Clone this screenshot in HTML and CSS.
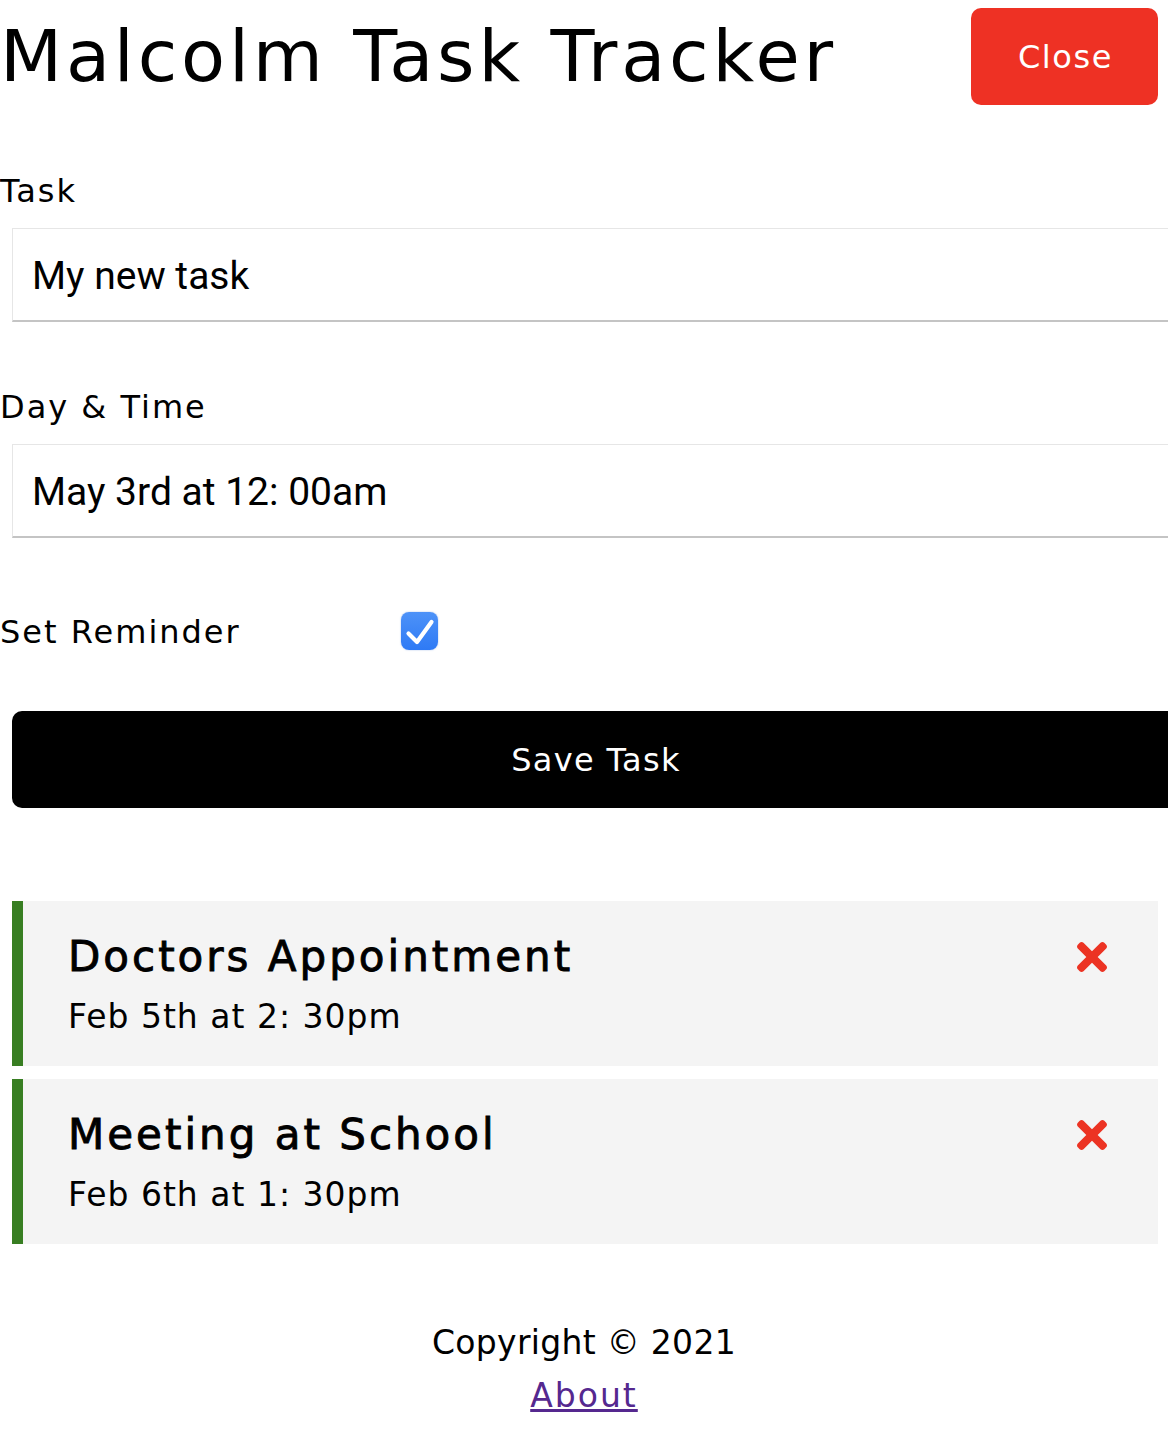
FILE: index.html
```html
<!DOCTYPE html>
<html lang="en">
<head>
<meta charset="utf-8">
<title>Malcolm Task Tracker</title>
<link rel="stylesheet" href="styles.css">
</head>
<body>
<div class="app">
  <header class="header">
    <h1 class="title">Malcolm Task Tracker</h1>
    <button class="btn btn-close">Close</button>
  </header>

  <form class="add-form">
    <div class="form-control">
      <label class="label">Task</label>
      <input class="field" type="text" value="My new task">
    </div>
    <div class="form-control">
      <label class="label">Day &amp; Time</label>
      <input class="field" type="text" value="May 3rd at 12: 00am">
    </div>
    <div class="form-control-check">
      <label class="label">Set Reminder</label>
      <span class="check">
        <svg viewBox="0 0 37 38" width="37" height="38"><path d="M7.5 21.5 L16 30 L30.5 10" fill="none" stroke="#fff" stroke-width="4.2" stroke-linecap="round" stroke-linejoin="round"/></svg>
      </span>
    </div>
    <button type="button" class="btn btn-block">Save Task</button>
  </form>

  <div class="tasks">
    <div class="task">
      <div class="task-text">
        <h3 class="task-title">Doctors Appointment</h3>
        <p class="task-day">Feb 5th at 2: 30pm</p>
      </div>
      <svg class="task-del" viewBox="0 80 352 352" width="30" height="30"><path fill="currentColor" d="M242.72 256l100.07-100.07c12.28-12.28 12.28-32.19 0-44.48l-22.24-22.24c-12.28-12.28-32.19-12.28-44.48 0L176 189.28 75.930 89.21c-12.28-12.28-32.19-12.280-44.48 0L9.21 111.450c-12.28 12.28-12.28 32.190 0 44.48L109.28 256 9.21 356.07c-12.28 12.28-12.28 32.19 0 44.48l22.24 22.24c12.28 12.28 32.2 12.28 44.48 0L176 322.72l100.07 100.07c12.28 12.28 32.2 12.28 44.480 0l22.24-22.24c12.28-12.28 12.28-32.19 0-44.48L242.72 256z"/></svg>
    </div>
    <div class="task">
      <div class="task-text">
        <h3 class="task-title">Meeting at School</h3>
        <p class="task-day">Feb 6th at 1: 30pm</p>
      </div>
      <svg class="task-del" viewBox="0 80 352 352" width="30" height="30"><path fill="currentColor" d="M242.72 256l100.07-100.07c12.28-12.28 12.28-32.19 0-44.48l-22.24-22.24c-12.28-12.28-32.19-12.28-44.48 0L176 189.28 75.930 89.21c-12.28-12.28-32.19-12.280-44.48 0L9.21 111.450c-12.28 12.28-12.28 32.190 0 44.48L109.28 256 9.21 356.07c-12.28 12.28-12.28 32.19 0 44.48l22.24 22.24c12.28 12.28 32.2 12.28 44.48 0L176 322.72l100.07 100.07c12.28 12.28 32.2 12.28 44.480 0l22.24-22.24c12.28-12.28 12.28-32.19 0-44.48L242.72 256z"/></svg>
    </div>
  </div>

  <footer class="footer">
    <p class="copy">Copyright © 2021</p>
    <a class="about" href="#">About</a>
  </footer>
</div>
</body>
</html>
```

FILE: styles.css
```css
* { box-sizing: border-box; }

html, body {
  margin: 0;
  padding: 0;
  background: #fff;
  overflow: hidden;
}

body {
  font-family: "DejaVu Sans", "Open Sans", sans-serif;
  color: #000;
}

.app {
  width: 1168px;
}

.header {
  display: flex;
  justify-content: space-between;
  align-items: center;
  padding: 8px 10px 0 0;
}

.title {
  margin: 0;
  font-size: 72px;
  font-weight: 400;
  line-height: 97px;
  letter-spacing: 3.8px;
}

.btn {
  border: none;
  border-radius: 10px;
  cursor: pointer;
  font-family: inherit;
  color: #fff;
}

.btn-close {
  width: 187px;
  height: 97px;
  background: #ee3124;
  font-size: 32px;
  letter-spacing: 1.6px;
  padding: 0 0 0 2px;
}

.add-form {
  padding-top: 63px;
}

.form-control {
  margin-bottom: 62px;
}

.label {
  display: block;
  font-size: 32px;
  line-height: 40px;
  letter-spacing: 2px;
  padding-top: 3px;
}

.field {
  display: block;
  width: 1168px;
  height: 94px;
  margin: 17px 0 0 12px;
  padding: 2px 19px 0;
  border: none;
  border-top: 1px solid #e6e6e6;
  border-left: 1px solid #e6e6e6;
  border-bottom: 2px solid #c4c4c4;
  font-family: Roboto, "Liberation Sans", sans-serif;
  font-size: 39px;
  letter-spacing: 0;
  color: #000;
  background: #fff;
  outline: none;
}

.form-control:nth-child(2) {
  margin-bottom: 73px;
}

.form-control-check {
  display: flex;
  align-items: center;
  height: 40px;
}

.form-control-check .label {
  width: 401px;
  padding-top: 1px;
}

.check {
  width: 37px;
  height: 38px;
  border-radius: 8px;
  background: linear-gradient(#4d92f8, #2e7af5);
  display: flex;
  align-items: center;
  justify-content: center;
  box-shadow: 0 0 1.5px rgba(30, 90, 200, 0.5);
}

.check svg {
  display: block;
}

.btn-block {
  display: block;
  width: 1168px;
  height: 97px;
  margin: 60px 0 0 12px;
  background: #000;
  font-size: 32px;
  letter-spacing: 1.3px;
}

.tasks {
  margin-top: 93px;
  padding: 0 10px 0 12px;
  display: flex;
  flex-direction: column;
  gap: 13px;
}

.task {
  height: 165px;
  background: #f4f4f4;
  border-left: 11px solid #387e22;
  display: flex;
  justify-content: space-between;
  align-items: flex-start;
  padding: 26px 51px 0 45px;
}

.task-title {
  margin: 0;
  font-size: 42px;
  font-weight: 400;
  -webkit-text-stroke: 0.9px #000;
  line-height: 60px;
  letter-spacing: 3px;
}

.task-day {
  margin: 0;
  font-size: 33px;
  line-height: 60px;
  letter-spacing: 1px;
}

.task-del {
  margin-top: 15px;
  color: #ec3323;
}

.footer {
  margin-top: 79px;
  display: flex;
  flex-direction: column;
  align-items: center;
  font-size: 33px;
  line-height: 40px;
}

.copy {
  margin: 0 0 13px;
  letter-spacing: 0.3px;
}

.about {
  color: #55288f;
  text-decoration: underline;
  letter-spacing: 2px;
}
```
